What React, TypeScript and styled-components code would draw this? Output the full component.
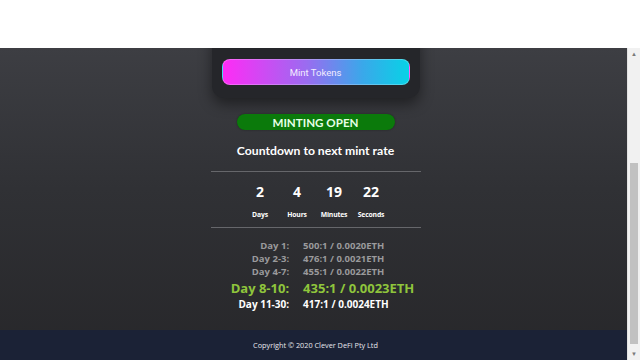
import React from 'react';
import styled, { createGlobalStyle, css } from 'styled-components';

const GlobalStyle = createGlobalStyle`
    html, body {
        margin: 0;
        padding: 0;
        width: 640px;
        height: 360px;
        overflow: hidden;
        background: #ffffff;
        font-family: 'Open Sans', 'Liberation Sans', sans-serif;
    }
`;

const Screen = styled.div`
    display: flex;
    flex-direction: column;
    width: 640px;
    height: 360px;
`;

const TopBar = styled.div`
    height: 48px;
    flex-shrink: 0;
    background: #ffffff;
`;

const Viewport = styled.div`
    display: flex;
    flex: 1;
    min-height: 0;
`;

const Page = styled.div`
    display: flex;
    flex-direction: column;
    flex: 1;
    overflow: hidden;
    background: linear-gradient(to bottom, #3d3e43 0%, #303135 45%, #27272a 100%);
`;

const Main = styled.main`
    display: flex;
    flex-direction: column;
    align-items: center;
    flex: 1;
    padding-left: 4px;
`;

const MintCard = styled.div`
    display: flex;
    justify-content: center;
    width: 208px;
    margin-top: -20px;
    padding: 31px 0 13px;
    background: #25262a;
    border-radius: 12px;
    box-shadow: 0 6px 14px rgba(0, 0, 0, 0.45);
`;

const MintButton = styled.button`
    width: 188px;
    height: 26px;
    border: 1px solid rgba(255, 255, 255, 0.25);
    border-radius: 8px;
    background: linear-gradient(to right, #ff2bf6 0%, #9a6cf0 45%, #3aa8ea 75%, #08d2e6 100%);
    color: #f2ecff;
    font-family: Roboto, 'Liberation Sans', sans-serif;
    font-size: 9.5px;
    cursor: pointer;
`;

const StatusBadge = styled.div`
    display: flex;
    align-items: center;
    justify-content: center;
    width: 158px;
    height: 16px;
    margin-top: 16px;
    border-radius: 8px;
    background: #0b7a0b;
    box-shadow: 0 0 2px rgba(0, 0, 0, 0.4);
    color: #e6ffe6;
    font-family: Lato, 'Open Sans', sans-serif;
    font-size: 11.6px;
    font-weight: 700;
`;

const Heading = styled.h2`
    margin: 13px 0 0;
    color: #ffffff;
    font-family: Lato, 'Open Sans', sans-serif;
    font-size: 12.2px;
    font-weight: 700;
`;

const Divider = styled.hr`
    width: 210px;
    margin: 0;
    border: none;
    border-top: 1px solid #66676b;
`;

const CountdownRow = styled.div`
    display: flex;
    margin: 10px 0 8px;
`;

const CountdownCell = styled.div`
    display: flex;
    flex-direction: column;
    align-items: center;
    width: 37px;
`;

const CountValue = styled.span`
    color: #ffffff;
    font-size: 14px;
    font-weight: 700;
    line-height: 19px;
`;

const CountLabel = styled.span`
    margin-top: 9px;
    color: #ffffff;
    font-size: 6.8px;
    font-weight: 700;
    letter-spacing: -0.15px;
`;

const RateTable = styled.div`
    display: grid;
    grid-template-columns: auto auto;
    column-gap: 14px;
    align-items: center;
    margin-top: 11px;
    margin-left: 14px;
`;

type Tier = 'past' | 'current' | 'next';

const tierStyles = {
    past: css`
        color: #9a9a9c;
        font-size: 9.5px;
        line-height: 13px;
    `,
    current: css`
        color: #8fc53c;
        font-size: 13px;
        line-height: 20px;
    `,
    next: css`
        color: #ffffff;
        font-size: 10px;
        line-height: 12px;
    `,
};

const RateLabel = styled.span<{ $tier: Tier }>`
    text-align: right;
    font-weight: 700;
    ${({ $tier }) => tierStyles[$tier]}
`;

const RateValue = styled.span<{ $tier: Tier }>`
    font-weight: 700;
    ${({ $tier }) => tierStyles[$tier]}
`;

const Footer = styled.footer`
    display: flex;
    align-items: center;
    justify-content: center;
    height: 30px;
    flex-shrink: 0;
    padding-left: 4px;
    background: #1b2236;
    color: #e8e8ee;
    font-size: 7.3px;
`;

const Scrollbar = styled.div`
    display: flex;
    flex-direction: column;
    width: 12px;
    background: #f1f1f1;
    border-left: 1px solid #e2e2e2;
`;

const ScrollArrow = styled.div`
    display: flex;
    align-items: center;
    justify-content: center;
    height: 12px;
    color: #7a7a7a;
    font-size: 6px;
`;

const ScrollTrack = styled.div`
    display: flex;
    flex-direction: column;
    flex: 1;
    padding: 103px 2px 4px;
`;

const ScrollThumb = styled.div`
    flex: 1;
    background: #c1c1c1;
`;

const countdown = [
    { value: '2', label: 'Days' },
    { value: '4', label: 'Hours' },
    { value: '19', label: 'Minutes' },
    { value: '22', label: 'Seconds' },
];

const rates: { day: string; rate: string; tier: Tier }[] = [
    { day: 'Day 1:', rate: '500:1 / 0.0020ETH', tier: 'past' },
    { day: 'Day 2-3:', rate: '476:1 / 0.0021ETH', tier: 'past' },
    { day: 'Day 4-7:', rate: '455:1 / 0.0022ETH', tier: 'past' },
    { day: 'Day 8-10:', rate: '435:1 / 0.0023ETH', tier: 'current' },
    { day: 'Day 11-30:', rate: '417:1 / 0.0024ETH', tier: 'next' },
];

function App() {
    return (
        <Screen>
            <GlobalStyle />
            <TopBar />
            <Viewport>
                <Page>
                    <Main>
                        <MintCard>
                            <MintButton>Mint Tokens</MintButton>
                        </MintCard>
                        <StatusBadge>MINTING OPEN</StatusBadge>
                        <Heading>Countdown to next mint rate</Heading>
                        <Divider style={{ marginTop: 13 }} />
                        <CountdownRow>
                            {countdown.map((c) => (
                                <CountdownCell key={c.label}>
                                    <CountValue>{c.value}</CountValue>
                                    <CountLabel>{c.label}</CountLabel>
                                </CountdownCell>
                            ))}
                        </CountdownRow>
                        <Divider />
                        <RateTable>
                            {rates.map((r) => (
                                <React.Fragment key={r.day}>
                                    <RateLabel $tier={r.tier}>{r.day}</RateLabel>
                                    <RateValue $tier={r.tier}>{r.rate}</RateValue>
                                </React.Fragment>
                            ))}
                        </RateTable>
                    </Main>
                    <Footer>Copyright © 2020 Clever DeFi Pty Ltd</Footer>
                </Page>
                <Scrollbar>
                    <ScrollArrow>▲</ScrollArrow>
                    <ScrollTrack>
                        <ScrollThumb />
                    </ScrollTrack>
                    <ScrollArrow>▼</ScrollArrow>
                </Scrollbar>
            </Viewport>
        </Screen>
    );
}

export default App;
